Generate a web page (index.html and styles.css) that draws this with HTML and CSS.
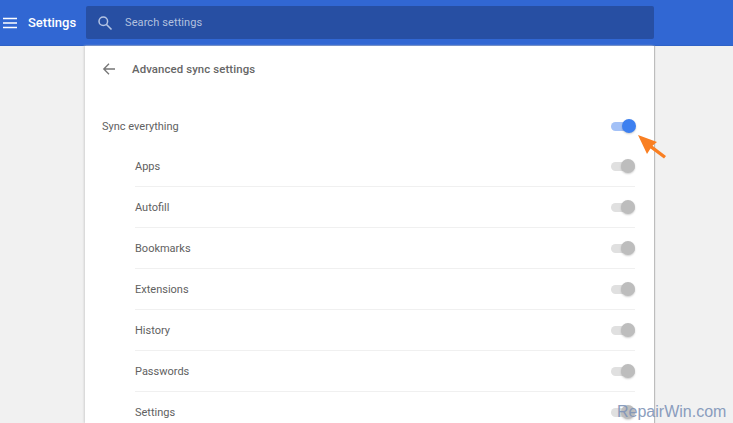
FILE: index.html
```
<!DOCTYPE html>
<html lang="en">
<head>
<meta charset="utf-8">
<title>Settings</title>
<link rel="stylesheet" href="styles.css">
</head>
<body>
<header class="topbar">
  <svg class="menu-icon" width="16" height="12" viewBox="0 0 16 12"><path d="M2 1.500h14M2 6h14M2 10.500h14" stroke="#fff" stroke-width="1.500" fill="none"/></svg>
  <span class="title">Settings</span>
  <div class="search">
    <svg class="search-icon" width="16" height="16" viewBox="0 0 16 16"><circle cx="6.300" cy="6.300" r="4.300" stroke="#b4c4e4" stroke-width="1.500" fill="none"/><path d="M9.500 9.500l5 5" stroke="#b4c4e4" stroke-width="1.600" fill="none"/></svg>
    <span class="search-text">Search settings</span>
  </div>
</header>
<main class="page">
  <section class="card">
    <div class="subhead">
      <svg class="back" width="14" height="14" viewBox="0 0 14 14"><path d="M13 7H2M7 1.800L1.800 7 7 12.200" stroke="#757575" stroke-width="1.300" fill="none"/></svg>
      <span class="subtitle">Advanced sync settings</span>
    </div>
    <div class="row-main">
      <span>Sync everything</span>
      <span class="toggle on"></span>
    </div>
    <ul class="list">
      <li class="row"><span>Apps</span><span class="toggle"></span></li>
      <li class="row"><span>Autofill</span><span class="toggle"></span></li>
      <li class="row"><span>Bookmarks</span><span class="toggle"></span></li>
      <li class="row"><span>Extensions</span><span class="toggle"></span></li>
      <li class="row"><span>History</span><span class="toggle"></span></li>
      <li class="row"><span>Passwords</span><span class="toggle"></span></li>
      <li class="row"><span>Settings</span><span class="toggle"></span></li>
    </ul>
  </section>
</main>
<svg class="arrow" width="30" height="26" viewBox="0 0 30 26"><path d="M0 0L19 7 14.500 10.800 28 21 26 23.500 12.500 13.500 9 19Z" fill="#f97f22"/></svg>
<span class="watermark">RepairWin.com</span>
</body>
</html>
```

FILE: styles.css
```
html, body {
  margin: 0;
  padding: 0;
  height: 423px;
  overflow: hidden;
}
body {
  background: #f1f1f1;
  font-family: Roboto, "Liberation Sans", sans-serif;
  position: relative;
  color: #616161;
}
.topbar {
  height: 46px;
  background: #3167d3;
  display: flex;
  align-items: center;
  box-sizing: border-box;
  border-bottom: 1px solid #2f62c6;
}
.menu-icon {
  margin-left: 1px;
  flex: none;
}
.title {
  color: #fff;
  font-size: 13px;
  font-weight: 500;
  margin-left: 11px;
  width: 58px;
  flex: none;
}
.search {
  width: 568px;
  height: 33px;
  background: #274fa3;
  border-radius: 2px;
  display: flex;
  align-items: center;
  flex: none;
}
.search-icon {
  margin-left: 11px;
  flex: none;
}
.search-text {
  margin-left: 12px;
  color: #b3c1df;
  font-size: 11px;
  letter-spacing: 0.1px;
}
.page {
  display: flex;
  padding-left: 85px;
}
.card {
  width: 569px;
  height: 377px;
  background: #fff;
  box-shadow: -1px 0 2px #d0d0d0, 1px 0 1px #bcbcbc;
  box-sizing: border-box;
  padding: 0 19px 0 17px;
  font-size: 11px;
}
.subhead {
  height: 46px;
  display: flex;
  align-items: center;
}
.back {
  flex: none;
}
.subtitle {
  margin-left: 16px;
  font-size: 11.400px;
  font-weight: 500;
  color: #666;
  letter-spacing: 0.1px;
}
.row-main {
  margin-top: 14px;
  height: 40px;
  display: flex;
  align-items: center;
  justify-content: space-between;
}
.list {
  list-style: none;
  margin: 0;
  padding: 0 0 0 33px;
}
.row {
  height: 40px;
  display: flex;
  align-items: center;
  justify-content: space-between;
  border-bottom: 1px solid #f0f0f0;
}
.row:last-child {
  border-bottom: 0;
}
.toggle {
  width: 24px;
  height: 9px;
  border-radius: 5px;
  background: #e0e0e0;
  position: relative;
  flex: none;
}
.toggle::after {
  content: "";
  position: absolute;
  right: 0;
  top: -3px;
  width: 14px;
  height: 14px;
  border-radius: 50%;
  background: #bdbdbd;
  box-shadow: 0 1px 2px rgba(0,0,0,.2);
}
.toggle.on {
  background: #a3c1f7;
}
.toggle.on::after {
  right: -1px;
  background: #3d80f0;
}
.arrow {
  position: absolute;
  left: 638px;
  top: 135px;
}
.watermark {
  position: absolute;
  left: 617px;
  top: 403px;
  font-family: "Liberation Sans", sans-serif;
  font-size: 16px;
  color: #7f94b8;
  opacity: .9;
}
```
